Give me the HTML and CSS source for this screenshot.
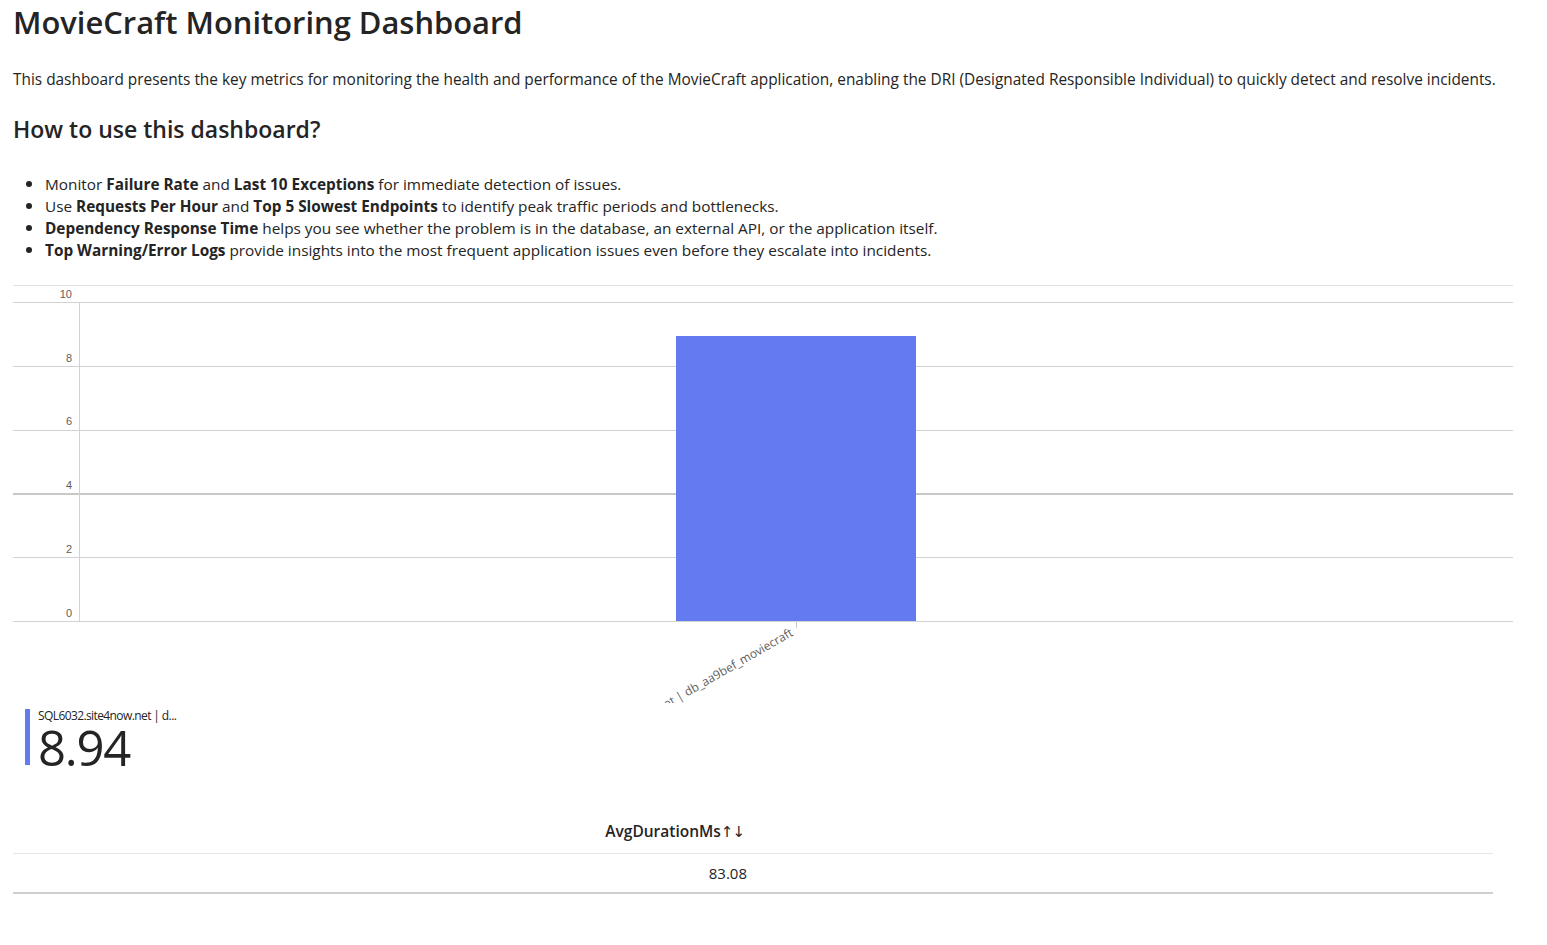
FILE: index.html
```html
<!DOCTYPE html>
<html lang="en">
<head>
<meta charset="utf-8">
<title>MovieCraft Monitoring Dashboard</title>
<link rel="stylesheet" href="styles.css">
</head>
<body>
<main class="page">
  <h1 class="title">MovieCraft Monitoring Dashboard</h1>
  <p class="intro">This dashboard presents the key metrics for monitoring the health and performance of the MovieCraft application, enabling the DRI (Designated Responsible Individual) to quickly detect and resolve incidents.</p>
  <h2 class="subtitle">How to use this dashboard?</h2>
  <ul class="tips">
    <li>Monitor <b>Failure Rate</b> and <b>Last 10 Exceptions</b> for immediate detection of issues.</li>
    <li>Use <b>Requests Per Hour</b> and <b>Top 5 Slowest Endpoints</b> to identify peak traffic periods and bottlenecks.</li>
    <li><b>Dependency Response Time</b> helps you see whether the problem is in the database, an external API, or the application itself.</li>
    <li><b>Top Warning/Error Logs</b> provide insights into the most frequent application issues even before they escalate into incidents.</li>
  </ul>

  <section class="chart">
    <svg class="chart-svg" width="1500" height="418" viewBox="0 0 1500 418">
      <line class="grid-top" x1="0" y1="0.5" x2="1500" y2="0.5"/>
      <line class="grid" x1="0" y1="17.5" x2="1500" y2="17.5"/>
      <line class="grid" x1="0" y1="81.5" x2="1500" y2="81.5"/>
      <line class="grid" x1="0" y1="145.5" x2="1500" y2="145.5"/>
      <line class="grid grid-strong" x1="0" y1="209" x2="1500" y2="209"/>
      <line class="grid" x1="0" y1="272.5" x2="1500" y2="272.5"/>
      <line class="grid" x1="0" y1="336.5" x2="1500" y2="336.5"/>
      <line class="grid" x1="66.5" y1="17" x2="66.5" y2="336"/>
      <text class="ylab" x="59" y="13">10</text>
      <text class="ylab" x="59" y="77">8</text>
      <text class="ylab" x="59" y="140">6</text>
      <text class="ylab" x="59" y="204">4</text>
      <text class="ylab" x="59" y="268">2</text>
      <text class="ylab" x="59" y="332">0</text>
      <rect class="bar" x="663" y="51" width="240" height="285"/>
      <line class="tick" x1="783.5" y1="337" x2="783.5" y2="343"/>
      <text class="xlab" transform="translate(781 350) rotate(-30)">SQL6032.site4now.net | db_aa9bef_moviecraft</text>
    </svg>
  </section>

  <section class="tile">
    <div class="tile-accent"></div>
    <div class="tile-body">
      <div class="tile-label">SQL6032.site4now.net | d...</div>
      <div class="tile-value">8.94</div>
    </div>
  </section>

  <table class="grid-table">
    <thead>
      <tr><th class="num">AvgDurationMs<span class="sort">↑↓</span></th><th></th></tr>
    </thead>
    <tbody>
      <tr><td class="num">83.08</td><td></td></tr>
    </tbody>
  </table>
</main>
</body>
</html>
```

FILE: styles.css
```css
html, body {
  margin: 0;
  padding: 0;
  background: #ffffff;
}

body {
  font-family: "Open Sans", "Noto Sans", sans-serif;
  color: #242424;
}

.page {
  padding: 0 13px;
}

.title {
  margin: 0;
  padding-top: 2px;
  font-size: 30.9px;
  line-height: 40px;
  font-weight: 600;
}

.intro {
  margin: 27px 0 0;
  font-size: 15.4px;
  line-height: 22px;
}

.subtitle {
  margin: 23px 0 0;
  font-size: 23px;
  line-height: 30px;
  font-weight: 600;
}

.tips {
  margin: 29px 0 0;
  padding-left: 32px;
  font-size: 15.35px;
  line-height: 22px;
}

.tips li::marker {
  font-size: 17px;
}

.tips b {
  font-weight: 700;
}

.chart {
  margin-top: 24px;
  width: 1500px;
  height: 418px;
  overflow: hidden;
}

.chart-svg {
  display: block;
  overflow: hidden;
}

.grid-top {
  stroke: #e1e1e1;
  stroke-width: 1;
}

.grid {
  stroke: #d2d2d2;
  stroke-width: 1;
}

.grid-strong {
  stroke: #c8c8c8;
  stroke-width: 2;
}

.ylab {
  font-family: "Liberation Sans", "Noto Sans", sans-serif;
  font-size: 11px;
  fill: #605e5c;
  text-anchor: end;
}

.bar {
  fill: #647af0;
}

.tick {
  stroke: #c8c8c8;
  stroke-width: 1;
}

.xlab {
  font-size: 12px;
  fill: #605e5c;
  text-anchor: end;
}

.tile {
  display: flex;
  align-items: flex-start;
  gap: 8px;
  margin: 6px 0 0 12px;
}

.tile-accent {
  width: 5px;
  height: 56px;
  background: #647af0;
}

.tile-body {
  display: flex;
  flex-direction: column;
}

.tile-label {
  font-size: 12px;
  line-height: 14px;
  letter-spacing: -0.6px;
  color: #242424;
}

.tile-value {
  font-size: 49px;
  line-height: 48px;
  font-weight: 400;
  letter-spacing: -1.2px;
  color: #242424;
}

.grid-table {
  margin-top: 38px;
  width: 1480px;
  border-collapse: collapse;
  table-layout: fixed;
}

.grid-table th,
.grid-table td {
  width: 50%;
  padding: 0 6px;
  font-size: 15px;
}

.grid-table th {
  height: 44px;
  font-size: 15.5px;
  font-weight: 600;
  padding-right: 9px;
  border-bottom: 1px solid #e6e6e6;
}

.grid-table td {
  height: 38px;
  border-bottom: 2px solid #cfcfcf;
}

.num {
  text-align: right;
}

.sort {
  font-family: "DejaVu Sans", sans-serif;
  font-weight: 400;
  font-size: 15px;
  letter-spacing: -1px;
}
```
